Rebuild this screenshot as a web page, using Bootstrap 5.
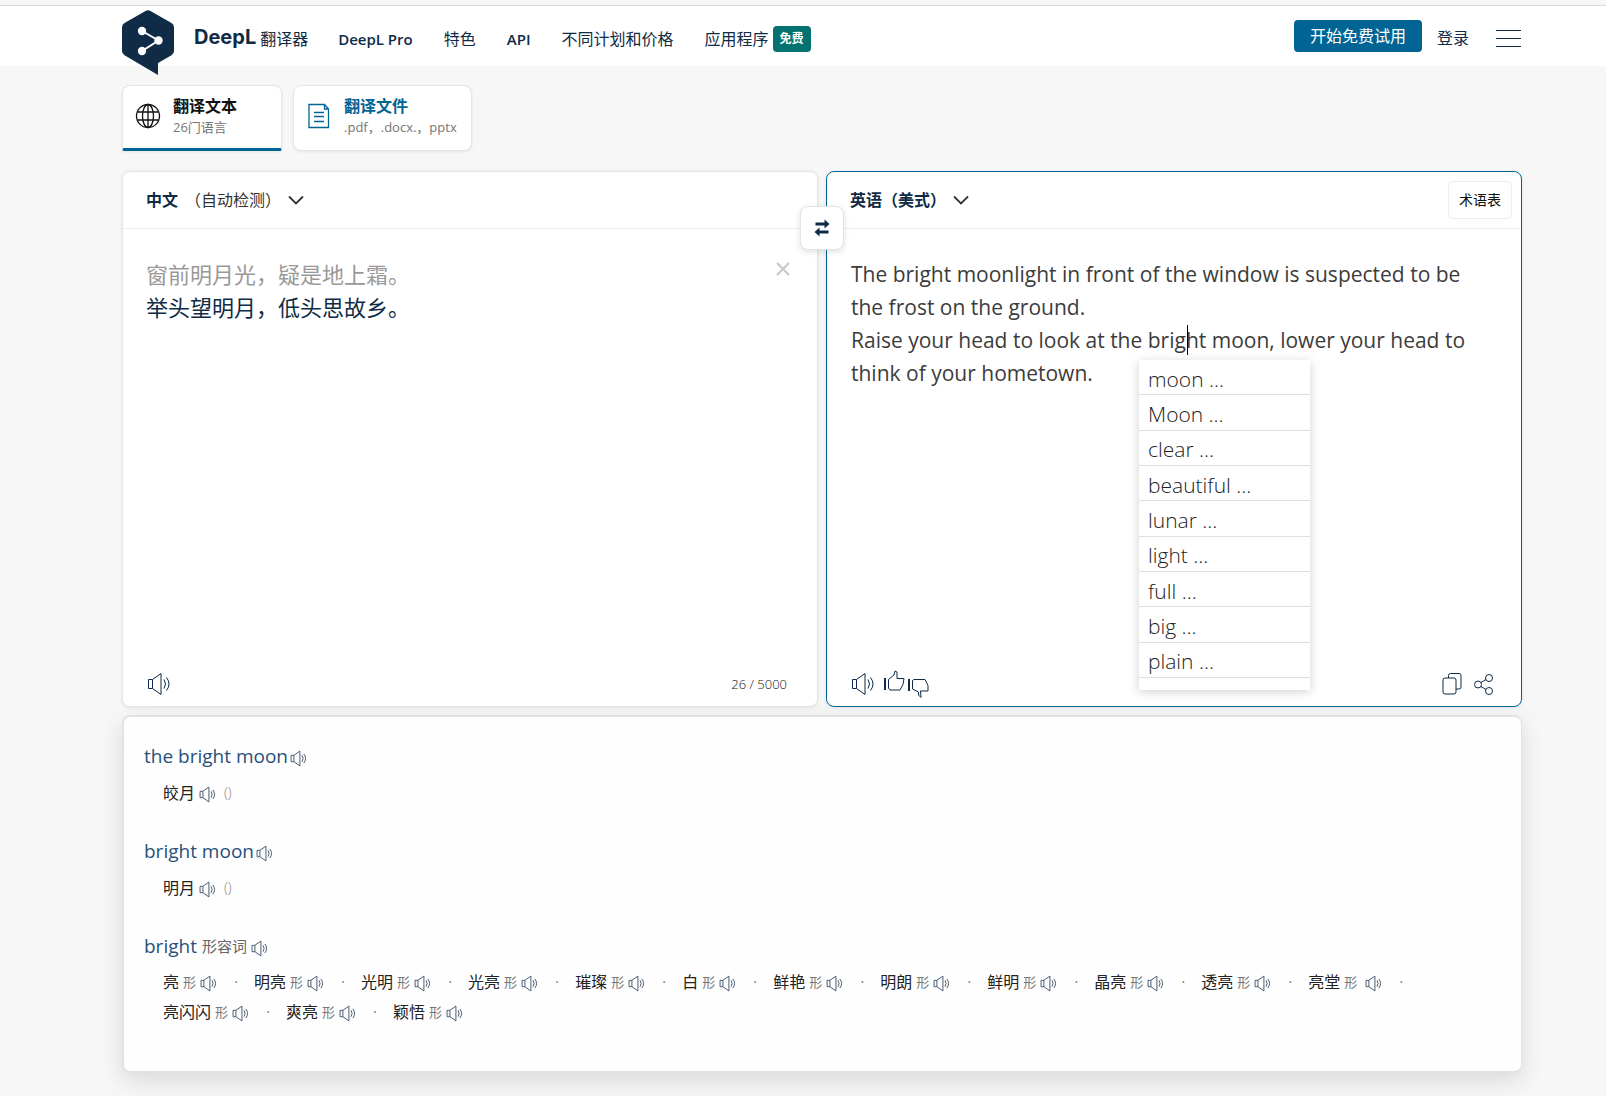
<!DOCTYPE html>
<html lang="zh-CN">
<head>
<meta charset="utf-8">
<meta name="viewport" content="width=device-width, initial-scale=1">
<title>DeepL 翻译器</title>
<link href="https://cdn.jsdelivr.net/npm/bootstrap@5.3.0/dist/css/bootstrap.min.css" rel="stylesheet">
<style>
  :root { --navy: #0f2b46; --blue: #006494; --rule: #eeeeee; }
  body { background: #f7f7f7; color: var(--navy); font-family: "Open Sans", "Noto Sans CJK SC", sans-serif; font-size: 16px; line-height: 24px; }
  a { color: inherit; text-decoration: none; }
  svg { display: block; flex: none; fill: none; stroke: currentColor; }
  svg.solid { stroke: none; fill: currentColor; }
  .icon-btn { border: 0; background: none; padding: 0; color: var(--navy); }
  .clear-btn { color: #c8c8c8; margin: 4px -3px 0 0; }
  .page-wrap { padding-left: 122px; padding-right: 84px; }
  .topbar { border-top: 1px solid #dadada; margin-top: 5px; height: 61px; }
  .logo-mark { margin-top: 4px; }
  .brand-word { font-family: Inter, sans-serif; font-weight: 700; font-size: 20px; padding-top: 4px; }
  .nav-group { padding-top: 2px; }
  .main-links { gap: 31px; margin-left: 30px; }
  .latin-link { font-size: 15px; font-weight: 600; }
  .free-tag { background: #04736f; font-size: 12px; line-height: 16px; padding: 5px 7px; border-radius: 4px; }
  .trial-btn { background: var(--blue); color: #fff; border: 0; border-radius: 4px; padding: 4px 16px; line-height: 24px; }
  .account { gap: 15px; padding-right: 1px; }
  .menu-btn { margin: 4px 0 0 12px; }
  .tab-row { gap: 11px; padding-top: 19px; margin-bottom: 20px; }
  .mode-tab { background: #fff; border: 1px solid #e6e6e6; border-radius: 8px; box-shadow: 0 1px 3px rgba(0,0,0,.08); height: 66px; padding: 9px 14px 0 12px; gap: 12px; line-height: 20px; text-align: left; }
  .mode-tab.active { border-bottom: 3px solid var(--blue); border-radius: 8px 8px 2px 2px; padding-right: 44px; }
  .mode-tab strong { color: #111; display: block; font-size: 16px; line-height: 22px; }
  .mode-tab small { color: #757575; font-size: 13px; line-height: 20px; display: block; }
  .mode-tab.files strong, .mode-tab.files svg { color: var(--blue); }
  .pane { background: #fff; border: 1px solid #e4e4e4; border-radius: 8px; min-height: 536px; box-shadow: 0 1px 4px rgba(0,0,0,.08); flex: 1 1 0; min-width: 0; }
  .pane.target { border-color: var(--blue); }
  .pane-head { height: 57px; border-bottom: 1px solid var(--rule); padding: 0 9px 0 23px; color: #111; }
  .lang-btn { border: 0; background: none; padding: 0; display: flex; align-items: center; color: var(--navy); gap: 7px; }
  .lang-btn span, .lang-btn svg { color: #333; }
  .glossary { border: 1px solid var(--rule); background: #fff; border-radius: 3px; font-size: 14px; padding: 6px 10px; color: #111; }
  .pane-body { padding: 29px 30px 0 24px; }
  .source .pane-body { padding-left: 23px; }
  .source-text { font-size: 22px; line-height: 33px; outline: 0; }
  .source-text .done { color: #999; }
  .target-text { display: block; width: 100%; height: 132px; border: 0; padding: 0; resize: none; outline: 0; overflow: hidden; background: none; font-size: 21px; line-height: 33px; color: #3c3c3c; }
  .pane-foot { padding: 0 21px 9px 24px; color: var(--navy); height: 36px; }
  .counter { font-size: 13px; font-weight: 300; padding-right: 9px; color: #111; }
  .swap-btn { position: absolute; left: 50%; top: 35px; transform: translateX(-50%); width: 44px; height: 44px; background: #fff; border: 1px solid #e2e2e2; border-radius: 8px; box-shadow: 0 2px 6px rgba(0,0,0,.12); color: var(--navy); display: flex; align-items: center; justify-content: center; z-index: 2; padding: 0; }
  .caret-mark { position: absolute; left: 360px; top: 96px; width: 1px; height: 30px; background: #000; }
  .alt-menu { position: absolute; left: 312px; top: 131px; width: 171px; height: 330px; padding: 0 0 12px; background: #fff; box-shadow: 0 2px 10px rgba(0,0,0,.18); display: flex; flex-direction: column; z-index: 3; list-style: none; margin: 0; }
  .alt-menu li { flex: 1 1 0; min-height: 0; border-bottom: 1px solid #dfdfdf; display: flex; align-items: center; }
  .alt-menu button { border: 0; background: none; padding: 3px 9px 0; font-size: 21px; line-height: 28px; font-weight: 300; color: #222; width: 100%; text-align: left; }
  .dict { background: #fefefe; border: 2px solid #e2e2e2; border-right-width: 1px; border-radius: 8px; box-shadow: 0 8px 24px rgba(0,0,0,.12); margin-top: 8px; padding: 23px 20px 44px; }
  .dict h2 { font-size: 19px; line-height: 32px; font-weight: 400; color: #29507a; margin: 0; display: flex; align-items: center; gap: 2px; }
  .dict h2 svg, .senses svg { color: #3b5068; margin-top: 5px; stroke-width: 1.300; }
  .dict h2 span { font-size: 15px; color: #666; margin: 0 2px 0 3px; }
  .senses { list-style: none; margin: 6px 0 0; padding: 0 0 0 19px; display: flex; flex-wrap: wrap; line-height: 30px; color: #222; }
  .senses li { display: flex; align-items: center; gap: 4px; }
  .senses svg { margin-top: 3px; }
  .senses i { font-style: normal; font-size: 13px; color: #777; }
  .senses em { font-style: normal; font-size: 14px; font-weight: 300; color: #888; margin-left: 4px; }
  .list-dots { margin-top: 5px; }
  .list-dots li:not(:last-child)::after { content: "·"; color: #777; width: 36px; text-align: center; font-size: 14px; margin-left: -3px; }
  .entry-block { margin-bottom: 27px; }
</style>
<script src="https://cdn.jsdelivr.net/npm/bootstrap@5.3.0/dist/js/bootstrap.bundle.min.js"></script>
</head>
<body>
<svg width="0" height="0" class="position-absolute" aria-hidden="true">
  <symbol id="speaker" viewBox="0 0 24 24"><path d="M1.500 7.500h4v9h-4zM5.500 7.500L14 1.500v21L5.500 16.500M17 7.500q3 4.500 0 9M19.500 5.500q5 6.500 0 13"/></symbol>
  <symbol id="chev" viewBox="0 0 16 10"><path d="M1 1.500l7 7 7-7" stroke-width="1.800"/></symbol>
</svg>

<header class="topbar bg-white page-wrap d-flex justify-content-between">
  <nav class="d-flex align-items-center" aria-label="主导航">
    <a href="#" class="logo-mark align-self-start" aria-label="DeepL">
      <svg class="solid" width="52" height="66" viewBox="0 0 52 66"><path d="M23.500 1q2.500-1.400 5 0L49.500 13q2.500 1.500 2.500 4.400V41q0 2.800-2.500 4.300L36 53v12L2.500 45.300Q0 43.800 0 41V17.400Q0 14.500 2.500 13z"/><g fill="#fff"><circle cx="20" cy="21" r="4.200"/><circle cx="36.500" cy="30.500" r="4.200"/><circle cx="20" cy="41" r="4.200"/></g><path fill="none" stroke="#fff" stroke-width="2" d="M20 21l16.500 9.500L20 41"/></svg>
    </a>
    <div class="d-flex align-items-center nav-group">
      <a href="#" class="d-flex align-items-center ms-3 ps-1 gap-1"><span class="brand-word pt-0">DeepL</span><span class="mt-1">翻译器</span></a>
      <div class="d-flex align-items-center main-links mt-1">
        <a href="#" class="latin-link">DeepL Pro</a>
        <a href="#">特色</a>
        <a href="#" class="latin-link">API</a>
        <a href="#">不同计划和价格</a>
        <a href="#" class="d-flex align-items-center gap-1">应用程序<b class="badge free-tag">免费</b></a>
      </div>
    </div>
  </nav>
  <div class="d-flex align-items-center account">
    <button type="button" class="trial-btn">开始免费试用</button>
    <a href="#" class="mt-1">登录</a>
    <button type="button" class="icon-btn menu-btn" aria-label="菜单"><svg width="25" height="17" viewBox="0 0 25 17"><path d="M0 .5h25M0 8.500h25M0 16.500h25"/></svg></button>
  </div>
</header>

<main class="page-wrap pb-4">
  <div class="d-flex tab-row">
    <button type="button" class="mode-tab active d-flex">
      <svg class="mt-2" width="26" height="26" viewBox="0 0 26 26" color="#111" stroke-width="1.300"><circle cx="13" cy="13" r="11.500"/><ellipse cx="13" cy="13" rx="5.500" ry="11.500"/><path d="M13 1.500v23M2.500 9h21M2.500 17h21"/></svg>
      <span><strong>翻译文本</strong><small>26门语言</small></span>
    </button>
    <button type="button" class="mode-tab files d-flex">
      <svg class="mt-2" width="26" height="26" viewBox="0 0 26 26" stroke-width="1.300"><path d="M3 1.500h15.500l4 4.500v18.500H3zM18.500 1.500V6h4M8 9.500h10M8 13.500h10M8 18.500h10"/></svg>
      <span><strong>翻译文件</strong><small>.pdf，.docx.，pptx</small></span>
    </button>
  </div>

  <div class="d-flex gap-2 position-relative">
    <section class="pane source d-flex flex-column">
      <div class="pane-head d-flex align-items-center">
        <button type="button" class="lang-btn"><b>中文</b><span>（自动检测）</span><svg width="16" height="10"><use href="#chev"/></svg></button>
      </div>
      <div class="pane-body d-flex justify-content-between align-items-start flex-grow-1">
        <div class="source-text" contenteditable="true" role="textbox" aria-multiline="true" aria-label="原文" spellcheck="false"><div class="done">窗前明月光，疑是地上霜。</div><div>举头望明月，低头思故乡。</div></div>
        <button type="button" class="icon-btn clear-btn" aria-label="清除"><svg width="14" height="14" viewBox="0 0 14 14"><path stroke-width="2" d="M1 1l12 12M13 1L1 13"/></svg></button>
      </div>
      <div class="pane-foot d-flex justify-content-between align-items-center">
        <button type="button" class="icon-btn" aria-label="朗读"><svg width="24" height="24"><use href="#speaker"/></svg></button>
        <span class="counter">26 / 5000</span>
      </div>
    </section>

    <button type="button" class="swap-btn" aria-label="互换语言"><svg class="solid" width="16" height="18" viewBox="0 0 16 18"><path d="M1.500 3.500H10.500V.5L15.500 5l-5 4.500v-3h-9zM14.500 11.500h-9v-3L.5 13l5 4.500v-3h9z"/></svg></button>

    <section class="pane target d-flex flex-column">
      <div class="pane-head d-flex align-items-center justify-content-between">
        <button type="button" class="lang-btn"><b>英语（美式）</b><svg width="16" height="10"><use href="#chev"/></svg></button>
        <button type="button" class="glossary">术语表</button>
      </div>
      <div class="pane-body flex-grow-1 position-relative">
        <textarea class="target-text" aria-label="译文" spellcheck="false">The bright moonlight in front of the window is suspected to be the frost on the ground.
Raise your head to look at the bright moon, lower your head to think of your hometown.</textarea>
        <span class="caret-mark"></span>
        <ul class="alt-menu">
          <li><button type="button">moon ...</button></li>
          <li><button type="button">Moon ...</button></li>
          <li><button type="button">clear ...</button></li>
          <li><button type="button">beautiful ...</button></li>
          <li><button type="button">lunar ...</button></li>
          <li><button type="button">light ...</button></li>
          <li><button type="button">full ...</button></li>
          <li><button type="button">big ...</button></li>
          <li><button type="button">plain ...</button></li>
        </ul>
      </div>
      <div class="pane-foot d-flex justify-content-between align-items-center">
        <div class="d-flex align-items-center">
          <button type="button" class="icon-btn me-2" aria-label="朗读"><svg width="24" height="24"><use href="#speaker"/></svg></button>
          <button type="button" class="icon-btn" aria-label="赞"><svg width="24" height="28" viewBox="0 0 24 28"><path d="M2 8v12" stroke-width="2"/><path d="M5.500 9.500L11 5l1-4 2 1v6.500h7l-1 6-3 5.500h-10l-1.500-2z"/></svg></button>
          <button type="button" class="icon-btn" aria-label="踩"><svg width="24" height="28" viewBox="0 0 24 28"><path d="M2 9v12" stroke-width="2"/><path d="M5.500 10.500l1.500-1h11l3 6v5.500h-7.500l.5 6.500-2.500-2.500v-3L5.500 19z"/></svg></button>
        </div>
        <div class="d-flex align-items-center gap-2 me-1">
          <button type="button" class="icon-btn" aria-label="复制"><svg width="24" height="24" viewBox="0 0 24 24"><rect x="3" y="6" width="13" height="16" rx="2"/><path d="M8.500 6V3.500q0-2 2-2h8.500q2 0 2 2V15q0 2-2 2h-3"/></svg></button>
          <button type="button" class="icon-btn" aria-label="分享"><svg width="24" height="24" viewBox="0 0 24 24"><circle cx="6" cy="12.500" r="3.500"/><circle cx="17" cy="6" r="3.500"/><circle cx="17" cy="19" r="3.500"/><path d="M9 10.500l5-3M9 14.500l5 3"/></svg></button>
        </div>
      </div>
    </section>
  </div>

  <section class="dict">
    <div class="entry-block">
      <h2>the bright moon<svg width="17" height="17"><use href="#speaker"/></svg></h2>
      <ul class="senses"><li>皎月<svg width="17" height="17"><use href="#speaker"/></svg><em>()</em></li></ul>
    </div>
    <div class="entry-block">
      <h2>bright moon<svg width="17" height="17"><use href="#speaker"/></svg></h2>
      <ul class="senses"><li>明月<svg width="17" height="17"><use href="#speaker"/></svg><em>()</em></li></ul>
    </div>
    <h2>bright<span>形容词</span><svg width="17" height="17"><use href="#speaker"/></svg></h2>
    <ul class="senses list-dots">
      <li>亮<i>形</i><svg width="17" height="17"><use href="#speaker"/></svg></li>
      <li>明亮<i>形</i><svg width="17" height="17"><use href="#speaker"/></svg></li>
      <li>光明<i>形</i><svg width="17" height="17"><use href="#speaker"/></svg></li>
      <li>光亮<i>形</i><svg width="17" height="17"><use href="#speaker"/></svg></li>
      <li>璀璨<i>形</i><svg width="17" height="17"><use href="#speaker"/></svg></li>
      <li>白<i>形</i><svg width="17" height="17"><use href="#speaker"/></svg></li>
      <li>鲜艳<i>形</i><svg width="17" height="17"><use href="#speaker"/></svg></li>
      <li>明朗<i>形</i><svg width="17" height="17"><use href="#speaker"/></svg></li>
      <li>鲜明<i>形</i><svg width="17" height="17"><use href="#speaker"/></svg></li>
      <li>晶亮<i>形</i><svg width="17" height="17"><use href="#speaker"/></svg></li>
      <li>透亮<i>形</i><svg width="17" height="17"><use href="#speaker"/></svg></li>
      <li>亮堂<i class="me-1">形</i><svg width="17" height="17"><use href="#speaker"/></svg></li>
      <li>亮闪闪<i>形</i><svg width="17" height="17"><use href="#speaker"/></svg></li>
      <li>爽亮<i>形</i><svg width="17" height="17"><use href="#speaker"/></svg></li>
      <li>颖悟<i>形</i><svg width="17" height="17"><use href="#speaker"/></svg></li>
    </ul>
  </section>
</main>
</body>
</html>
